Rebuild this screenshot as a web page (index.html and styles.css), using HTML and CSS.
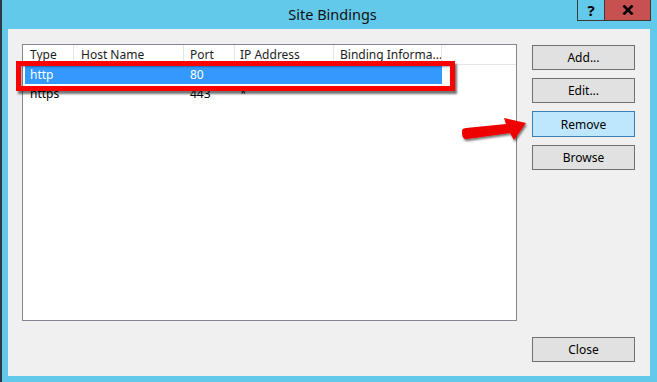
FILE: index.html
```html
<!DOCTYPE html>
<html>
<head>
<meta charset="utf-8">
<link rel="stylesheet" href="styles.css">
</head>
<body>
<div class="window">
  <div class="titlebar">
    <div class="title">Site Bindings</div>
    <div class="caption-buttons">
      <div class="cap-help">?</div>
      <div class="cap-close">
        <svg width="12" height="10" viewBox="0 0 12 10"><path d="M1.5 0.5 L10.5 9.5 M10.5 0.5 L1.5 9.5" stroke="#000" stroke-width="2.6"/></svg>
      </div>
    </div>
  </div>
  <div class="client">
    <div class="listview">
      <div class="lv-header">
        <div class="col c1">Type</div>
        <div class="col c2">Host Name</div>
        <div class="col c3">Port</div>
        <div class="col c4">IP Address</div>
        <div class="col c5">Binding Informa...</div>
      </div>
      <div class="lv-row selected">
        <div class="col c1">http</div>
        <div class="col c2"></div>
        <div class="col c3">80</div>
        <div class="col c4"></div>
        <div class="col c5"></div>
      </div>
      <div class="lv-row">
        <div class="col c1">https</div>
        <div class="col c2"></div>
        <div class="col c3">443</div>
        <div class="col c4">*</div>
        <div class="col c5"></div>
      </div>
    </div>
    <div class="side">
      <button class="btn">Add...</button>
      <button class="btn">Edit...</button>
      <button class="btn hover">Remove</button>
      <button class="btn">Browse</button>
      <button class="btn close">Close</button>
    </div>
  </div>
  <div class="highlight"></div>
  <svg class="arrow" width="80" height="40" viewBox="0 0 80 40">
    <defs>
      <filter id="sh" x="-20%" y="-20%" width="140%" height="160%">
        <feDropShadow dx="1" dy="2" stdDeviation="1.2" flood-color="#000" flood-opacity="0.55"/>
      </filter>
    </defs>
    <path filter="url(#sh)" fill="#ee0000" d="M9 20 C9 17 10 16.5 13 16 L53 12 L51 6 L73 11 L61 28 L57 21 L14 27 C10 27.5 9 24 9 20 Z"/>
  </svg>
</div>
</body>
</html>
```
FILE: styles.css
```css
* { box-sizing: border-box; }
html, body { margin: 0; padding: 0; }
body {
  width: 657px;
  height: 382px;
  overflow: hidden;
  font-family: "Segoe UI", "Noto Sans", "Liberation Sans", sans-serif;
  font-size: 12px;
  color: #000;
}
.window {
  position: relative;
  width: 657px;
  height: 382px;
  background: #62c9ea;
  border-left: 2px solid #2f3a40;
  display: flex;
  flex-direction: column;
}
.titlebar {
  height: 29px;
  position: relative;
  display: flex;
  justify-content: center;
}
.title {
  font-size: 14.5px;
  line-height: 29px;
  color: #111;
  padding-left: 6px;
}
.caption-buttons {
  position: absolute;
  top: 0;
  right: 6px;
  display: flex;
  height: 21px;
  border: 1px solid #3a3a3a;
  border-top: none;
}
.cap-help {
  width: 27px;
  text-align: center;
  font-weight: bold;
  font-size: 15px;
  line-height: 20px;
  border-right: 1px solid #3a3a3a;
}
.cap-close {
  width: 45px;
  background: #c75050;
  display: flex;
  align-items: center;
  justify-content: center;
}
.client {
  margin: 0 7px 6px 6px;
  flex: 1;
  background: #f0f0f0;
  display: flex;
  gap: 15px;
  padding: 15px 15px 14px 14px;
}
.listview {
  width: 495px;
  height: 277px;
  background: #fff;
  border: 1px solid #828790;
}
.lv-header {
  display: flex;
  height: 20px;
  border-bottom: 1px solid #e5e5e5;
}
.lv-header .col {
  border-right: 1px solid #e5e5e5;
  line-height: 20px;
  color: #1e1e1e;
}
.col {
  padding-left: 7px;
  white-space: nowrap;
  overflow: hidden;
}
.c1 { width: 51px; }
.c2 { width: 110px; }
.c3 { width: 51px; padding-left: 6px; }
.c4 { width: 99px; padding-left: 5px; }
.c5 { width: 108px; padding-left: 6px; }
.lv-row {
  display: flex;
  height: 19px;
  line-height: 19px;
}
.lv-row.selected {
  background: #3399ff;
  color: #fff;
  margin-left: 2px;
  width: 417px;
}
.lv-row.selected .c1 { width: 49px; padding-left: 5px; }
.side {
  flex: 1;
  display: flex;
  flex-direction: column;
  gap: 8px;
  padding-top: 1px;
}
.btn {
  font: inherit;
  height: 25px;
  width: 103px;
  background: #e1e1e1;
  border: 1px solid #707070;
  color: #000;
  padding: 0;
  margin: 0;
}
.btn.hover {
  background: #bee6fd;
  border-color: #3c7fb1;
  height: 26px;
}
.btn.close { margin-top: auto; }
.highlight {
  position: absolute;
  left: 14px;
  top: 61px;
  width: 439px;
  height: 30px;
  border: 5px solid #ff0000;
  box-shadow: 2px 3px 2px rgba(0,0,0,0.55), inset 1px 1px 2px rgba(0,0,0,0.35);
}
.arrow {
  position: absolute;
  left: 451px;
  top: 112px;
}
```
